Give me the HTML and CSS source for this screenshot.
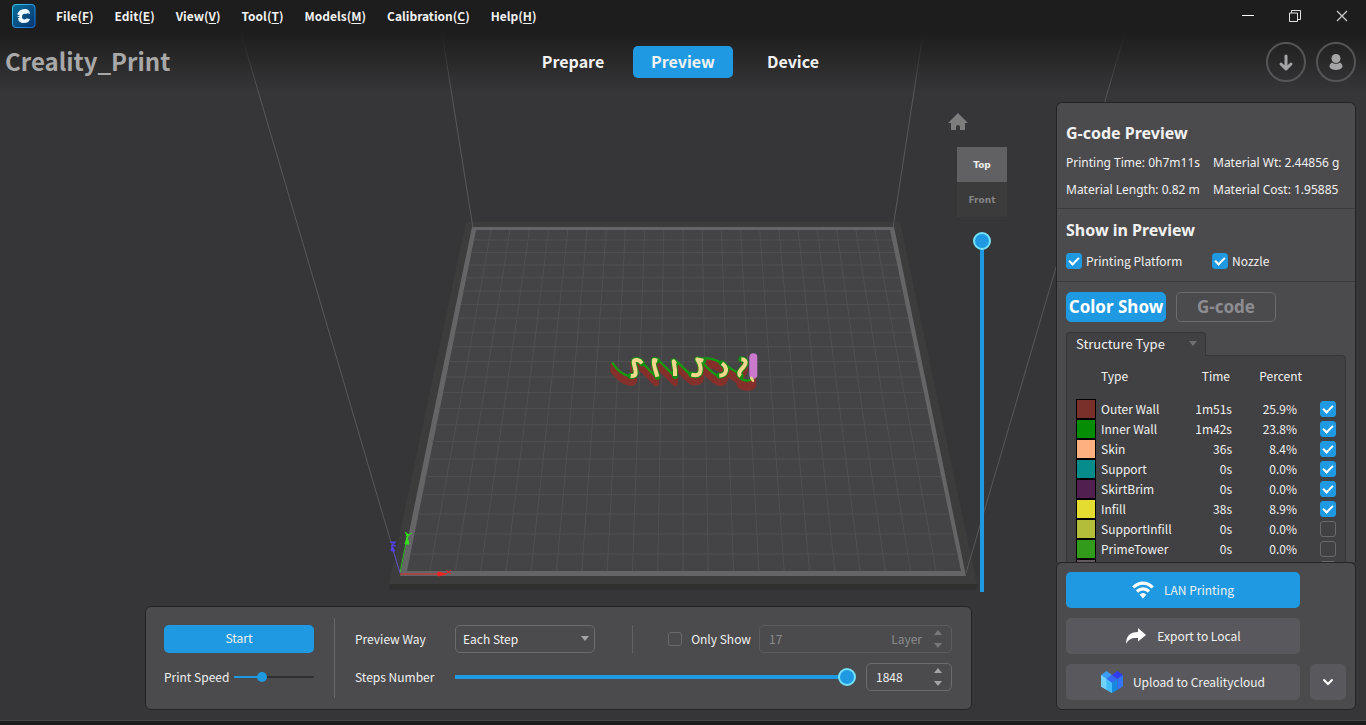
FILE: index.html
```html
<!DOCTYPE html>
<html lang="en">
<head>
<meta charset="utf-8">
<title>Creality Print</title>
<link rel="stylesheet" href="styles.css">
</head>
<body>
<div class="app">
  <svg class="scene" viewBox="0 0 1366 725" preserveAspectRatio="xMidYMin slice" aria-hidden="true">
    <defs>
      <path id="squiggle" d="M38 70C50 88 64 104 88 108C104 111 106 104 103 90C98 72 92 60 104 57C122 54 142 88 168 110C174 108 168 92 164 78C158 62 156 54 168 57C184 64 204 92 226 110V92C222 78 218 66 222 60C238 64 252 92 276 106C292 110 306 104 304 90C302 76 290 62 304 57C330 50 352 62 370 72C384 84 380 104 364 110C346 110 322 84 306 66"/>
      <path id="squiggle-end" d="M376 74C400 92 412 100 426 104M430 56C442 62 436 74 426 86C416 98 410 110 426 118C440 124 456 122 462 112"/>
      <path id="skin" d="M92 108C112 110 108 94 104 80C100 66 98 58 112 60C118 61 122 64 126 70M172 110C168 94 158 72 162 60L172 62M225 108V90L221 64L226 72M274 104C300 110 302 98 302 84C302 74 296 66 292 58L310 62M366 70C386 84 380 106 358 107M424 58C446 60 436 76 424 88C416 98 416 104 422 108"/>
    </defs>
    <polygon class="plate" points="466,222 900,222 977,584 389,584"/>
    <polygon class="plate-side" points="389,584 977,584 976,590 390,590"/>
    <polygon class="plate-rim" points="472,227 894,227 966,576 400,576"/>
    <polygon class="plate-bed" points="476,230 890,230 961,571 407,571"/>
    <path class="grid" d="M491 230L430 571M510 230L455.500 571M529.400 230L480.700 571M548.600 230L506 571M567.800 230L531.200 571M587 230L556.500 571M606.200 230L581.800 571M625.400 230L607.100 571M644.600 230L632.400 571M663.800 230L657.700 571M683 230V571M702.200 230L708.300 571M721.400 230L733.600 571M740.600 230L758.900 571M759.800 230L784.200 571M779 230L809.500 571M798.200 230L834.800 571M817.400 230L860 571M836.600 230L885.300 571M855.800 230L910.500 571M875 230L936 571"/>
    <path class="grid" d="M474 240H892M471 252.400H895M469 265H897M466 277.800H900M463 291H903M461 304.400H905M458 318.200H908M455 332.300H911M452 346.800H914M449 361.700H917M446 377H920M443 392.400H923M439 408.400H927M436 424.800H930M432 441.600H934M429 459H937M425 476.600H941M422 494.800H944M418 514H948M414 534H952M410 554H956"/>
    <path class="volume" d="M241 33L400 573M442 33L473 228M923 33L893 228M1125 33L966 573"/>
    <g transform="translate(600 340) scale(.3333)" fill="none" stroke-linejoin="round" stroke-linecap="round">
      <g stroke="#85302b" stroke-width="14">
        <use href="#squiggle" y="22"/><use href="#squiggle" y="14"/><use href="#squiggle" y="5"/>
        <use href="#squiggle-end" y="24"/><use href="#squiggle-end" y="15"/><use href="#squiggle-end" y="5"/>
      </g>
      <g stroke="#129c12" stroke-width="7"><use href="#squiggle"/><use href="#squiggle-end"/></g>
      <use href="#skin" stroke="#118d12" stroke-width="18"/>
      <use href="#skin" stroke="#f3d58e" stroke-width="12" stroke-linecap="butt"/>
      <path d="M460 52V104" stroke="#cb79cf" stroke-width="24"/>
      <path d="M454 114L459 122" stroke="#e9d57e" stroke-width="8"/>
    </g>
    <path d="M400 573L406 543" stroke="#31c51d"/><path d="M405 544L407 537L409 544ZM405 532L409 535L407 538M409 535L412 533" fill="#35df1d" stroke="#35df1d"/>
    <path d="M400 573L393 550" stroke="#5747c9"/><path d="M391 551L392 546L395 551ZM390 542H396L391 546H396" fill="#5540e0" stroke="#5540e0"/>
    <path d="M400 574H440" stroke="#e22828"/><path d="M438 572L446 574L438 576ZM446 570L451 574M451 570L446 574" fill="#f02222" stroke="#f02222"/>
  </svg>

  <header class="titlebar">
    <svg class="logo" viewBox="0 0 24 24" aria-label="Creality">
      <defs><linearGradient id="lg" x1="0" y1="0" x2="1" y2="1"><stop offset="0" stop-color="#087099"/><stop offset="1" stop-color="#07336f"/></linearGradient>
      <linearGradient id="lb" x1="0" y1="0" x2="1" y2="1"><stop offset="0" stop-color="#35c9f5"/><stop offset="1" stop-color="#126ddb"/></linearGradient></defs>
      <rect x=".5" y=".5" width="22.500" height="23" rx="3" fill="url(#lg)" stroke="url(#lb)"/>
      <path d="M6 9C7 6 10 5 13 5C16 5 18 7 18 10C16 9 15 9 14 10C12 9 10 10 10 13C10 15 12 16 14 15C15 14 16 15 18 15C17 18 15 19 12 19C8 19 6 17 6 14L8 14L5 12L8 12L5 10Z" fill="#eef8ff"/>
    </svg>
    <nav class="menu">
      <button>File(<u>F</u>)</button><button>Edit(<u>E</u>)</button><button>View(<u>V</u>)</button><button>Tool(<u>T</u>)</button><button>Models(<u>M</u>)</button><button>Calibration(<u>C</u>)</button><button>Help(<u>H</u>)</button>
    </nav>
    <div class="window-buttons">
      <button aria-label="Minimize"><svg viewBox="0 0 12 12"><path d="M0 5.500H12" stroke="#fff" fill="none"/></svg></button>
      <button aria-label="Restore"><svg viewBox="0 0 12 12"><path d="M.5 3H8.500V11.500H.5ZM2.500 3V.5H11.500V9.500H9" stroke="#e2e2e2" fill="none"/></svg></button>
      <button aria-label="Close"><svg viewBox="0 0 12 12"><path d="M1 1L11 11M11 1L1 11" stroke="#c9c9c9" stroke-width="1.300" fill="none"/></svg></button>
    </div>
  </header>

  <div class="toolbar">
    <h1 class="project">Creality_Print</h1>
    <nav class="tabs"><button>Prepare</button><button class="tab-active">Preview</button><button>Device</button></nav>
    <div class="account">
      <button aria-label="Downloads"><svg viewBox="2 2 36 36"><path d="M20 14V27M15 22L20 27L25 22" stroke="#a5a5a7" stroke-width="3" fill="none" stroke-linecap="round" stroke-linejoin="round"/></svg></button>
      <button aria-label="Account"><svg viewBox="2 2 36 36" fill="#a5a5a7"><circle cx="20" cy="16.500" r="4.500"/><path d="M16 20.500C18 22.300 22 22.300 24 20.500C29 24 26 28 20 28S11 24 16 20.500Z"/></svg></button>
    </div>
  </div>

  <main class="workspace">
    <section class="viewport">
      <div class="view-controls">
        <button class="home" aria-label="Home view"><svg viewBox="0 0 20 18"><path d="M10 0L20 10H17V17H12V14A2 2 0 0 0 8 14V17H3V10H0Z" fill="#7d7d7e"/></svg></button>
        <div class="cube"><button class="cube-top">Top</button><button class="cube-front">Front</button></div>
        <input class="layer-slider" type="range" min="1" max="17" value="17" aria-label="Layer">
      </div>
      <section class="panel playback">
        <div class="playback-left">
          <button class="start">Start</button>
          <div class="row"><label for="speed">Print Speed</label><input class="range speed" id="speed" type="range" min="0" max="100" value="33" style="--fill:35%"></div>
        </div>
        <div class="playback-right">
          <div class="row">
            <label class="field-label" for="way">Preview Way</label>
            <span class="select way"><select id="way"><option>Each Step</option></select></span>
            <span class="divider"></span>
            <span class="only"><input type="checkbox" class="check check-small" id="only"><label for="only">Only Show</label></span>
            <span class="number number-off"><input type="number" value="17" disabled aria-label="Layer number"><span>Layer</span><svg viewBox="0 0 8 18"><path d="M0 5L4 0L8 5ZM0 13H8L4 18Z"/></svg></span>
          </div>
          <div class="row">
            <label class="field-label" for="steps">Steps Number</label>
            <input class="range steps" id="steps" type="range" min="1" max="1848" value="1848" style="--fill:99%">
            <span class="number number-steps"><input type="number" value="1848" aria-label="Step"><svg viewBox="0 0 8 18"><path d="M0 5L4 0L8 5ZM0 13H8L4 18Z"/></svg></span>
          </div>
        </div>
      </section>
    </section>

    <aside class="sidebar">
      <div class="panel info">
        <section class="stats">
          <h2>G-code Preview</h2>
          <div class="stats-grid"><span>Printing Time: 0h7m11s</span><span>Material Wt: 2.44856 g</span><span>Material Length: 0.82 m</span><span>Material Cost: 1.95885</span></div>
        </section>
        <section class="show">
          <h2>Show in Preview</h2>
          <div class="show-options">
            <span><input type="checkbox" class="check" id="platform" checked><label for="platform">Printing Platform</label></span>
            <span><input type="checkbox" class="check" id="nozzle" checked><label for="nozzle">Nozzle</label></span>
          </div>
        </section>
        <section class="colors">
          <div class="modes"><button class="mode-active">Color Show</button><button>G-code</button></div>
          <span class="select structure"><select aria-label="Color by"><option>Structure Type</option></select></span>
          <div class="table-box">
            <table>
              <thead><tr><th></th><th class="name">Type</th><th>Time</th><th>Percent</th><th></th></tr></thead>
              <tbody>
                <tr><td><i class="swatch outer"></i></td><td class="name">Outer Wall</td><td>1m51s</td><td>25.9%</td><td><input type="checkbox" class="check" aria-label="Outer Wall" checked></td></tr>
                <tr><td><i class="swatch inner"></i></td><td class="name">Inner Wall</td><td>1m42s</td><td>23.8%</td><td><input type="checkbox" class="check" aria-label="Inner Wall" checked></td></tr>
                <tr><td><i class="swatch skin"></i></td><td class="name">Skin</td><td>36s</td><td>8.4%</td><td><input type="checkbox" class="check" aria-label="Skin" checked></td></tr>
                <tr><td><i class="swatch support"></i></td><td class="name">Support</td><td>0s</td><td>0.0%</td><td><input type="checkbox" class="check" aria-label="Support" checked></td></tr>
                <tr><td><i class="swatch brim"></i></td><td class="name">SkirtBrim</td><td>0s</td><td>0.0%</td><td><input type="checkbox" class="check" aria-label="SkirtBrim" checked></td></tr>
                <tr><td><i class="swatch infill"></i></td><td class="name">Infill</td><td>38s</td><td>8.9%</td><td><input type="checkbox" class="check" aria-label="Infill" checked></td></tr>
                <tr><td><i class="swatch support-infill"></i></td><td class="name">SupportInfill</td><td>0s</td><td>0.0%</td><td><input type="checkbox" class="check" aria-label="SupportInfill"></td></tr>
                <tr><td><i class="swatch tower"></i></td><td class="name">PrimeTower</td><td>0s</td><td>0.0%</td><td><input type="checkbox" class="check" aria-label="PrimeTower"></td></tr>
                <tr><td><i class="swatch other"></i></td><td class="name"></td><td></td><td></td><td><input type="checkbox" class="check" aria-label="Other"></td></tr>
              </tbody>
            </table>
          </div>
        </section>
      </div>
      <div class="panel actions">
        <button class="primary"><svg viewBox="0 0 22 18" fill="none" stroke="#fff" stroke-width="3.200"><path d="M1.300 6.500C7 .6 15 .6 20.700 6.500M5 10.500C8.500 7 13.500 7 17 10.500"/><path d="M7.500 13.500Q11 10.500 14.500 13.500L11 17.500Z" fill="#fff" stroke="none"/></svg>LAN Printing</button>
        <button><svg viewBox="0 0 22 18"><path d="M13 1L21 8L13 14.500V11C7 10.500 3.500 12 1 17C1 9 5 5 13 5Z" fill="#fff"/></svg>Export to Local</button>
        <div class="upload">
          <button><svg class="cloud" viewBox="0 0 22 22"><path d="M0 4L11 9.500V22L0 15.500Z" fill="#5cc8ff"/><path d="M0 4L5.500 0L11 4L5.500 8Z" fill="#3a9cf5"/><path d="M11 4L16.500 0L22 4L16.500 8Z" fill="#303cf4"/><path d="M5.500 8L11 4L16.500 8L11 12Z" fill="#3568fa"/><path d="M0 4L5.500 8V18.700L0 15.500Z" fill="#73d1ff"/><path d="M5.500 8L11 12V22L5.500 18.700Z" fill="#42bbfa"/><path d="M11 12L16.500 8V18.700L11 22Z" fill="#1489df"/><path d="M16.500 8L22 4V15.500L16.500 18.700Z" fill="#3274fb"/></svg>Upload to Crealitycloud</button>
          <button class="more" aria-label="More upload options"><svg viewBox="0 0 12 8"><path d="M2 2L6 6L10 2" fill="none" stroke="#fff" stroke-width="2" stroke-linecap="round"/></svg></button>
        </div>
      </div>
    </aside>
  </main>
  <footer class="statusbar"></footer>
</div>
</body>
</html>
```

FILE: styles.css
```css
* { box-sizing: border-box; }
body { margin: 0; background: #363638; color: #f1f1f1; font: 12px/20px "Noto Sans CJK SC", "Noto Sans", sans-serif; }
button, input, select { font: inherit; color: inherit; margin: 0; padding: 0; border: 0; background: none; }
h1, h2 { margin: 0; }
svg { display: block; flex: none; }
.app { position: relative; height: 100vh; min-height: 640px; display: flex; flex-direction: column; overflow: hidden; }
.scene { position: absolute; inset: 0; width: 100%; height: 100%; }
.titlebar, .toolbar, .workspace, .statusbar { position: relative; }
.plate { fill: #3c3c3d; }
.plate-side { fill: #2f2f30; }
.plate-rim { fill: #656567; }
.plate-bed { fill: #444446; }
.grid { stroke: #505052; fill: none; }
.volume { stroke: #58585a; fill: none; }

.titlebar { display: flex; align-items: center; height: 32px; padding: 0 18px 0 12px; background: #1d1d1d; }
.logo { width: 24px; height: 24px; }
.menu { display: flex; gap: 21px; margin-left: 20px; font-weight: 700; }
.menu u { text-underline-offset: 2px; }
.window-buttons { display: flex; gap: 35px; margin-left: auto; }
.window-buttons svg { width: 12px; height: 12px; }
.toolbar { display: grid; grid-template-columns: 1fr auto 1fr; align-items: center; height: 60px; padding: 0 5px; background: linear-gradient(#1d1d1d, rgba(54, 54, 56, 0)); }
.project { font-size: 24px; line-height: 30px; padding-bottom: 2px; font-weight: 700; color: #a8a8a8; }
.tabs { display: flex; gap: 10px; font-size: 16px; font-weight: 700; }
.tabs button { width: 100px; height: 32px; padding-bottom: 2px; border-radius: 5px; }
.tabs .tab-active { background: #1f9ae2; }
.account { display: flex; gap: 10px; justify-content: flex-end; padding-right: 5px; }
.account button { width: 40px; height: 40px; border: 2px solid #555557; border-radius: 50%; }
.account svg { width: 36px; height: 36px; }

.workspace { flex: 1; min-height: 0; display: flex; padding: 10px; }
.viewport { flex: 1; display: flex; flex-direction: column; gap: 14px; padding: 0 84px 0 135px; }
.view-controls { flex: 1; min-height: 0; display: flex; flex-direction: column; align-self: flex-end; align-items: flex-end; width: 59px; margin-right: -35px; padding-top: 11px; }
.home { align-self: flex-start; }
.home svg { width: 20px; height: 18px; }
.cube { display: flex; flex-direction: column; width: 50px; margin: 16px 0 15px; font: bold 9px/12px "DejaVu Sans", sans-serif; }
.cube button { height: 35px; }
.cube-top { background: #616163; color: #ededed; }
.cube-front { background: #3b3b3b; color: #858585; }
.layer-slider { flex: 1; min-height: 0; width: 18px; margin-right: 16px; writing-mode: vertical-lr; direction: rtl; appearance: none; background: linear-gradient(#1f9ae2, #1f9ae2) center bottom / 4px calc(100% - 9px) no-repeat; }

.panel { background: #4b4b4d; border: 1px solid #242425; border-radius: 6px; }
.playback { display: flex; padding: 11px 19px 11px 18px; }
.playback-left { display: flex; flex-direction: column; gap: 10px; width: 171px; padding: 7px 20px 7px 0; border-right: 1px solid #666668; }
.playback-right { flex: 1; display: flex; flex-direction: column; gap: 10px; padding: 7px 0 7px 20px; min-width: 0; }
.row { display: flex; align-items: center; height: 28px; }
.start { height: 28px; padding-bottom: 2px; border-radius: 5px; background: #1f9ae2; }
.field-label { width: 100px; flex: none; }
.range { appearance: none; min-width: 0; flex: 1; }
.range::-webkit-slider-thumb { appearance: none; }
.speed { height: 10px; margin-left: 5px; background: linear-gradient(#1f9ae2, #1f9ae2) left center / var(--fill) 2px no-repeat, linear-gradient(#303032, #303032) center / 100% 2px no-repeat; }
.speed::-webkit-slider-thumb { width: 10px; height: 10px; border-radius: 50%; background: #1f9ae2; }
.steps { height: 18px; margin-right: 10px; background: linear-gradient(#1f9ae2, #1f9ae2) left center / var(--fill) 4px no-repeat; }
.steps::-webkit-slider-thumb, .layer-slider::-webkit-slider-thumb { appearance: none; width: 18px; height: 18px; border: 2px solid #73e2fa; border-radius: 50%; background: #1f9ae2; }
.select { position: relative; display: block; }
.select select { appearance: none; width: 100%; height: 100%; }
.select::after { content: ""; position: absolute; right: 6px; top: 50%; margin-top: -3px; border: 4px solid transparent; border-top: 5px solid #a4a4a6; border-bottom: 0; pointer-events: none; }
.way { width: 140px; height: 28px; }
.way select { padding: 0 7px; border: 1px solid #6c6c6f; border-radius: 5px; }
.divider { width: 1px; height: 28px; margin-left: 37px; background: #626264; }
.only { display: flex; align-items: center; gap: 9px; margin-left: auto; }
.number { display: flex; align-items: center; height: 28px; border: 1px solid #6c6c6f; border-radius: 5px; padding: 0 9px; }
.number input { flex: 1; min-width: 0; appearance: textfield; }
.number input::-webkit-inner-spin-button { appearance: none; display: none; }
.number svg { width: 8px; height: 18px; fill: #a4a4a6; }
.number-off { width: 193px; margin-left: 8px; gap: 12px; border-color: #5c5c5e; color: #8a8a8c; }
.number-off input { color: #8a8a8c; }
.number-off svg { fill: #78787a; }
.number-steps { width: 86px; }

.check { appearance: none; flex: none; display: grid; place-items: center; width: 16px; height: 16px; border: 1px solid #69696b; border-radius: 3px; }
.check:checked { border-color: #1f9ae2; background: #1f9ae2; }
.check:checked::after { content: ""; width: 8px; height: 4px; border: solid #fff; border-width: 0 0 2px 2px; transform: translateY(-1px) rotate(-45deg); }
.check-small { width: 14px; height: 14px; }

.sidebar { width: 300px; flex: none; display: flex; flex-direction: column; }
.info { flex: 1; min-height: 0; overflow: hidden; border-bottom: 0; border-radius: 6px 6px 0 0; }
.info h2 { font: bold 16px/24px "Noto Sans", sans-serif; }
.stats { padding: 18px 9px 8px; border-bottom: 1px solid #3b3b3d; }
.stats-grid { display: grid; grid-template-columns: 147px 1fr; row-gap: 7px; margin-top: 8px; white-space: nowrap; font-family: "Noto Sans", sans-serif; }
.show { padding: 9px 9px 10px; border-bottom: 1px solid #3b3b3d; }
.show-options { display: grid; grid-template-columns: 146px 1fr; margin-top: 9px; }
.show-options span { display: flex; align-items: center; gap: 4px; }
.colors { padding: 10px 9px 0; }
.modes { display: flex; gap: 10px; margin-bottom: 10px; font: bold 17px/24px "Noto Sans", sans-serif; }
.modes button { width: 100px; height: 30px; border: 1px solid #6c6c6f; border-radius: 5px; color: #8d8d91; white-space: nowrap; }
.modes .mode-active { background: #1f9ae2; border-color: #1f9ae2; color: #fff; }
.structure { width: 140px; height: 24px; margin-bottom: -1px; z-index: 1; font-size: 13px; }
.structure select { padding: 0 9px 1px; background: #414143; border: 1px solid #353537; border-bottom: 0; border-radius: 4px 4px 0 0; }
.structure::after { right: 9px; border-top-color: #707072; }
.table-box { width: 280px; background: #414143; border: 1px solid #353537; border-radius: 0 4px 0 0; padding: 0 9px; }
table { width: 100%; border-collapse: collapse; table-layout: fixed; }
th { height: 43px; padding: 10px 0 0; font-weight: 400; text-align: right; vertical-align: top; }
th:nth-child(1) { width: 20px; }
th:nth-child(2) { width: 80px; }
th:nth-child(3) { width: 56px; padding-right: 2px; }
th:nth-child(4) { width: 70px; }
td { height: 20px; padding: 0; text-align: right; line-height: 20px; }
td:nth-child(4) { padding-right: 5px; }
.name { text-align: left; padding-left: 5px; }
td .check { margin-left: auto; }
.swatch { display: block; width: 20px; height: 20px; border: 1px solid #000; }
.outer { background: #7a302a; }
.inner { background: #058d05; }
.skin { background: #ffb080; }
.support { background: #068c8b; }
.brim { background: #511f50; }
.infill { background: #e5dc31; }
.support-infill { background: #b3bd39; }
.tower { background: #339b1b; }
.other { background: #635a60; }
.actions { display: flex; flex-direction: column; gap: 10px; padding: 9px; }
.actions button { display: flex; align-items: center; justify-content: center; gap: 10px; width: 234px; height: 36px; border-radius: 5px; background: #59595d; }
.actions .primary { background: #1f9ae2; }
.actions svg { width: 22px; height: 18px; }
.actions .cloud { height: 22px; }
.upload { display: flex; gap: 10px; }
.actions .more { width: 36px; }
.actions .more svg { width: 12px; height: 8px; }
.statusbar { height: 5px; background: #1c1c1c; border-top: 1px solid #464648; }
```
